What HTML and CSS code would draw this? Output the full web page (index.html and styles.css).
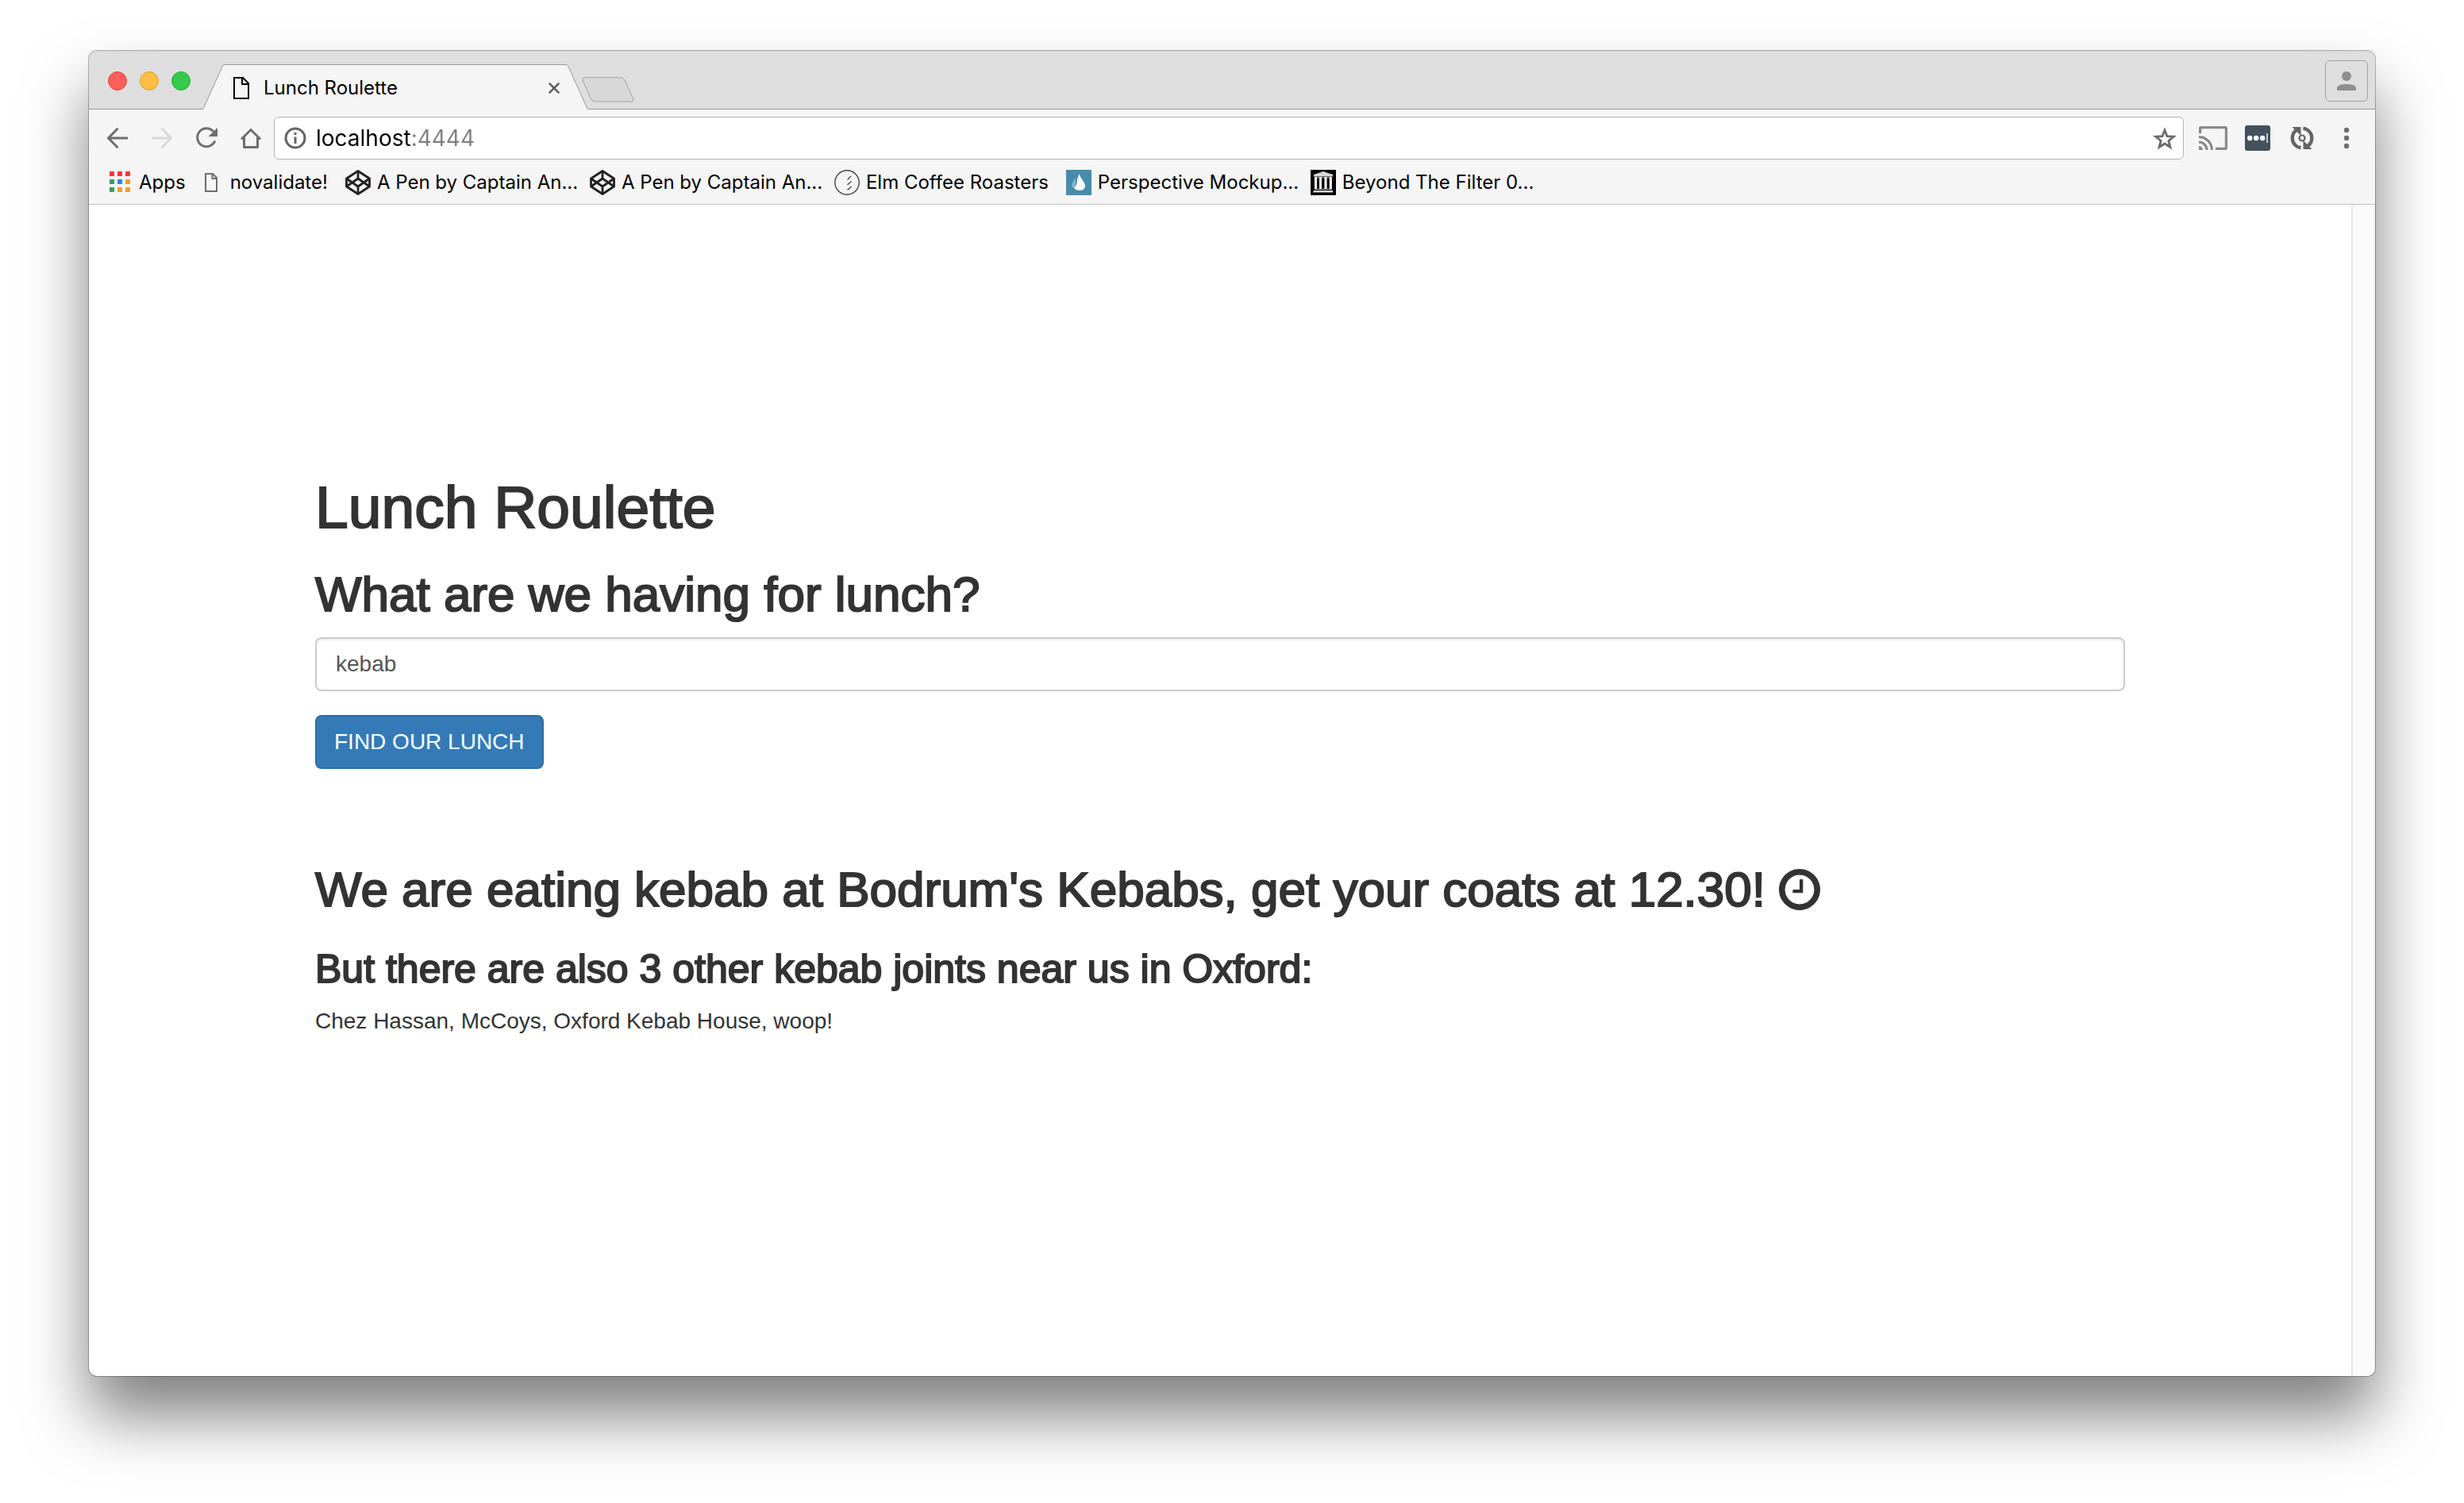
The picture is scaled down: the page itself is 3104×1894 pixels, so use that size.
FILE: index.html
```html
<!DOCTYPE html>
<html lang="en">
<head>
<meta charset="utf-8">
<meta name="viewport" content="width=device-width, initial-scale=1">
<title>Lunch Roulette</title>
<link rel="stylesheet" href="styles.css">
</head>
<body>
<div class="window">
  <header class="tabstrip">
    <div class="lights">
      <button class="light light-close" type="button" aria-label="Close window"></button>
      <button class="light light-minimise" type="button" aria-label="Minimise window"></button>
      <button class="light light-zoom" type="button" aria-label="Zoom window"></button>
    </div>
    <div class="tab">
      <svg class="tab-edge" viewBox="0 0 28 57" aria-hidden="true"><path d="M0 57L1 56.500L25 3Q26 .5 28 .5V57Z" fill="#f5f5f5"/><path d="M0 56.500Q1 56 2 54L25 3Q26 .5 28 .5" fill="none" stroke="#999"/></svg>
      <div class="tab-body">
        <svg class="tab-icon" viewBox="0 0 20 28" fill="none" stroke="#000" stroke-width="2" aria-hidden="true"><path d="M1 1H12L19 8V27H1Z"/><path d="M11 1V9H19"/></svg>
        <span class="tab-title">Lunch Roulette</span>
        <button class="tab-close" type="button" aria-label="Close tab"><svg viewBox="0 0 14 14" stroke="#5a5a5a" stroke-width="2.400" aria-hidden="true"><path d="M.7 .7L13.300 13.300M13.300 .7L.7 13.300"/></svg></button>
      </div>
      <svg class="tab-edge" viewBox="0 0 28 57" aria-hidden="true"><path d="M0 .5Q2 .5 3 3L26 54Q27 56.500 28 56.500V57H0Z" fill="#f5f5f5"/><path d="M0 .5Q2 .5 3 3L26 54Q27 56.500 28 56.500" fill="none" stroke="#999"/></svg>
    </div>
    <button class="new-tab" type="button" aria-label="New tab"><svg viewBox="0 0 66 32" aria-hidden="true"><path d="M4 .7H48Q52 .7 54 4L64.500 27Q66 31 63 31H17Q13 31 11 27L1 4Q0 .7 4 .7Z" fill="#d8d8d8" stroke="#a3a3a3"/></svg></button>
    <button class="profile" type="button" aria-label="Profile"><svg viewBox="0 0 24 24" fill="#8e8e8e" aria-hidden="true"><circle cx="12" cy="6" r="6"/><path d="M0 24V21C0 17 7 16 12 16S24 17 24 21V24Z"/></svg></button>
  </header>

  <nav class="toolbar" aria-label="Navigation">
    <button class="tool" type="button" aria-label="Back"><svg viewBox="0 0 28 28" fill="none" stroke="#6e6e6e" stroke-width="3" aria-hidden="true"><path d="M14.500 1.800L2.500 14L14.500 26.200M3 14H27"/></svg></button>
    <button class="tool" type="button" aria-label="Forward" disabled><svg viewBox="0 0 28 28" fill="none" stroke="#d9d9d9" stroke-width="3" aria-hidden="true"><path d="M13.500 1.800L25.500 14L13.500 26.200M25 14H1"/></svg></button>
    <button class="tool" type="button" aria-label="Reload"><svg viewBox="0 0 28 28" aria-hidden="true"><path d="M23 5.800A11.500 11.500 0 1 0 24.800 17.500" fill="none" stroke="#6e6e6e" stroke-width="3"/><path d="M28 1V12H16.500Z" fill="#6e6e6e"/></svg></button>
    <button class="tool" type="button" aria-label="Home"><svg viewBox="0 0 28 28" fill="none" stroke="#6e6e6e" stroke-width="3" aria-hidden="true"><path d="M2 15.500L14 3.500L26 15.500" stroke-linejoin="miter"/><path d="M5.500 13V25.500H22.500V13" stroke-linejoin="round"/></svg></button>
    <div class="omnibox">
      <svg class="info" viewBox="0 0 28 28" fill="none" stroke="#666" aria-hidden="true"><circle cx="14" cy="14" r="12" stroke-width="3"/><path d="M14 12.500V21M14 7V10" stroke-width="3"/></svg>
      <input class="address" type="text" value="localhost:4444" aria-label="Address" spellcheck="false">
      <button class="star" type="button" aria-label="Bookmark this page"><svg viewBox="0 0 30 28" fill="none" stroke="#6a6a6a" stroke-width="2.800" aria-hidden="true"><path d="M15 4L18 11.700L26.300 12.200L19.900 17.500L22 25.500L15 21L8 25.500L10.100 17.500L3.700 12.200L12 11.700Z"/></svg></button>
    </div>
    <button class="tool" type="button" aria-label="Cast"><svg class="cast" viewBox="0 0 36 30" fill="none" stroke="#8a8a8a" stroke-width="3.200" aria-hidden="true"><path d="M1.600 9V2.500Q1.600 1.600 2.500 1.600H33.500Q34.400 1.600 34.400 2.500V27.500Q34.400 28.400 33.500 28.400H21"/><path d="M0 13.600A16.400 16.400 0 0 1 16.400 30M0 20A10 10 0 0 1 10 30"/><path d="M0 25A5 5 0 0 1 5 30H0Z" fill="#8a8a8a" stroke="none"/></svg></button>
    <button class="tool" type="button" aria-label="Password manager"><svg class="square" viewBox="0 0 32 32" aria-hidden="true"><rect width="32" height="32" rx="3" fill="#43525c"/><g fill="#fff"><circle cx="6.200" cy="16" r="3.200"/><circle cx="14.200" cy="16" r="3.200"/><circle cx="22.200" cy="16" r="3.200"/></g><path d="M28 10V22" stroke="#bcc3c8" stroke-width="2"/></svg></button>
    <button class="tool" type="button" aria-label="Sync"><svg class="square" viewBox="0 0 32 32" fill="none" stroke="#646464" aria-hidden="true"><g stroke-width="4.500"><path d="M9 5.900A12.300 12.300 0 0 0 14.500 28.200"/><path d="M23 26.100A12.300 12.300 0 0 0 17.500 3.800"/></g><path d="M3.500 2H14.500V13Z M28.500 30H17.500V19Z" fill="#646464" stroke="none"/><circle cx="16" cy="16" r="3.500" stroke-width="2.200" fill="#f5f5f5"/></svg></button>
    <button class="tool" type="button" aria-label="Menu"><svg viewBox="0 0 28 28" fill="#6e6e6e" aria-hidden="true"><circle cx="14" cy="4" r="3.200"/><circle cx="14" cy="14" r="3.200"/><circle cx="14" cy="24" r="3.200"/></svg></button>
  </nav>

  <nav class="bookmarks" aria-label="Bookmarks">
    <a class="bookmark" href="#"><svg viewBox="0 0 32 32" aria-hidden="true"><path d="M3 2h6v6h-6zM13 2h6v6h-6zM23 2h6v6h-6z" fill="#f33b3b"/><path d="M3 12h6v6h-6zM3 22h6v6h-6z" fill="#36a05a"/><path d="M13 12h6v6h-6z" fill="#2a86f3"/><path d="M23 12h6v6h-6zM13 22h6v6h-6zM23 22h6v6h-6z" fill="#f0a026"/></svg>Apps</a>
    <a class="bookmark" href="#"><svg viewBox="0 0 32 32" fill="none" stroke="#6e6e6e" stroke-width="2" aria-hidden="true"><path d="M9 5H18L23 10V27H9Z"/><path d="M17.500 5V11H23"/></svg>novalidate!</a>
    <a class="bookmark bookmark-long" href="#"><svg viewBox="0 0 32 32" fill="none" stroke="#222" stroke-width="2.800" stroke-linejoin="round" aria-hidden="true"><path d="M16 1.500L30.500 11V21L16 30.500L1.500 21V11Z"/><path d="M16 1.500V11L30.500 21M16 30.500V21L1.500 11M16 11L1.500 21M16 21L30.500 11"/></svg>A Pen by Captain An...</a>
    <a class="bookmark bookmark-long" href="#"><svg viewBox="0 0 32 32" fill="none" stroke="#222" stroke-width="2.800" stroke-linejoin="round" aria-hidden="true"><path d="M16 1.500L30.500 11V21L16 30.500L1.500 21V11Z"/><path d="M16 1.500V11L30.500 21M16 30.500V21L1.500 11M16 11L1.500 21M16 21L30.500 11"/></svg>A Pen by Captain An...</a>
    <a class="bookmark" href="#"><svg viewBox="0 0 32 32" fill="none" stroke="#444" stroke-width="1.400" aria-hidden="true"><circle cx="16" cy="16" r="15.200"/><path d="M16.500 12.500L21 8M16.500 19L21.500 14.500M16.500 25.500L21.500 21"/></svg>Elm Coffee Roasters</a>
    <a class="bookmark bookmark-long" href="#"><svg viewBox="0 0 32 32" aria-hidden="true"><path fill="#458cac" d="M0 0h32v32H0z"/><path d="M12 10C9 14 7 17 7 20Q8 24 12 24Z" fill="#7db4cf"/><path d="M16.500 5C18 11 24 15 24 21Q23 26 17 26Q11 26 10.500 22Q14 20 14 12Z" fill="#fff"/></svg>Perspective Mockup...</a>
    <a class="bookmark bookmark-long" href="#"><svg viewBox="0 0 32 32" aria-hidden="true"><path d="M0 0h32v32H0z"/><path d="M4 6L16 2L28 6V8.500H4ZM4 26H28V28.500H3Z" fill="#d5d8d5"/><path d="M5 10H27M5 24.500H27" stroke="#aaa" stroke-width="1"/><path d="M6.500 9V24M12.500 9V24M19 9V24M25.300 9V24" stroke="#eee" stroke-width="3.200"/></svg>Beyond The Filter 0...</a>
  </nav>

  <div class="viewport">
    <main class="page">
      <div class="container">
        <h1 class="title">Lunch Roulette</h1>
        <form class="search">
          <label class="heading" for="food">What are we having for lunch?</label>
          <input class="field" id="food" type="text" value="kebab">
          <button class="submit" type="button">FIND OUR LUNCH</button>
        </form>
        <section class="result">
          <h2 class="heading">We are eating kebab at Bodrum's Kebabs, get your coats at 12.30! <svg class="clock" viewBox="0 128 1536 1536" aria-hidden="true"><path fill="currentColor" stroke="none" d="M896 544v448q0 14-9 23t-23 9h-320q-14 0-23-9t-9-23v-64q0-14 9-23t23-9h224v-352q0-14 9-23t23-9h64q14 0 23 9t9 23zm416 352q0-148-73-273t-198-198-273-73-273 73-198 198-73 273 73 273 198 198 273 73 273-73 198-198 73-273zm224 0q0 209-103 385.500t-279.500 279.500-385.500 103-385.500-103-279.500-279.500-103-385.500 103-385.500 279.500-279.500 385.500-103 385.500 103 279.500 279.500 103 385.500z"/></svg></h2>
          <h3 class="subheading">But there are also 3 other kebab joints near us in Oxford:</h3>
          <p class="others">Chez Hassan, McCoys, Oxford Kebab House, woop!</p>
        </section>
      </div>
    </main>
    <div class="scroll-track" aria-hidden="true"></div>
  </div>
</div>
</body>
</html>
```
FILE: styles.css
```css
* { box-sizing: border-box; }

body {
  margin: 0;
  min-height: 100vh;
  padding: 64px 112px 160px;
  display: flex;
  background: #fff;
  color: #333;
  font-family: "Liberation Sans", Arial, sans-serif;
  font-size: 28px;
  line-height: 40px;
}

button {
  margin: 0;
  padding: 0;
  border: 0;
  background: none;
  font: inherit;
}

svg { display: block; flex: none; }

/* Window frame */
.window {
  flex: 1;
  min-width: 0;
  display: flex;
  flex-direction: column;
  border-radius: 10px;
  background: #fff;
  box-shadow: 0 0 0 1px rgba(0, 0, 0, .28), 0 50px 80px rgba(0, 0, 0, .5);
}

/* Tab strip */
.tabstrip {
  height: 74px;
  display: flex;
  align-items: flex-end;
  padding: 0 9px 0 24px;
  border-radius: 10px 10px 0 0;
  background: #dedede;
  box-shadow: inset 0 -1px #999, inset 0 1px #d2d2d2;
  font-family: Inter, "Noto Sans", sans-serif;
}

.lights {
  display: flex;
  gap: 16px;
  margin: 0 15px 24px 0;
}

.light {
  width: 24px;
  height: 24px;
  border: 1px solid;
  border-radius: 50%;
}

.light-close { background: #fe5f5b; border-color: #e2443f; }
.light-minimise { background: #febe41; border-color: #dfa032; }
.light-zoom { background: #35ca4b; border-color: #26ab35; }

.tab { display: flex; }

.tab-edge { width: 28px; height: 57px; }

.tab-body {
  width: 430px;
  display: flex;
  align-items: center;
  padding: 2px 8px 0 11px;
  border-top: 1px solid #999;
  background: #f5f5f5;
  color: #000;
  font-size: 24px;
}

.tab-icon { width: 20px; height: 28px; }

.tab-title { flex: 1; padding-left: 18px; }

.tab-close svg { width: 14px; height: 14px; }

.new-tab { margin: 0 auto 9px -8px; }
.new-tab svg { width: 66px; height: 32px; }

.profile {
  width: 54px;
  height: 52px;
  margin-bottom: 10px;
  display: grid;
  place-items: center;
  border: 1px solid #a0a0a0;
  border-radius: 6px;
}

.profile svg { width: 24px; height: 24px; }

/* Toolbar */
.toolbar {
  display: flex;
  align-items: center;
  padding: 9px 8px 3px;
  background: #f5f5f5;
}

.tool {
  width: 56px;
  height: 54px;
  display: grid;
  place-items: center;
}

.tool svg { width: 28px; height: 28px; }
.tool .cast { width: 36px; height: 30px; }
.tool .square { width: 32px; height: 32px; }

.omnibox {
  flex: 1;
  height: 54px;
  display: flex;
  align-items: center;
  gap: 12px;
  margin: 0 9px 0 1px;
  padding: 0 8px 0 12px;
  border: 1px solid #b4b4b4;
  border-radius: 6px;
  background: #fff;
}

.info { width: 28px; height: 28px; }

.address {
  flex: 1;
  min-width: 0;
  padding: 0;
  border: 0;
  outline: 0;
  font: 28px/40px Inter, "Noto Sans", sans-serif;
  color: transparent;
  background: linear-gradient(90deg, #000 121px, #808080 121px) text;
}

.star svg { width: 30px; height: 28px; }

/* Bookmarks */
.bookmarks {
  height: 54px;
  display: flex;
  align-items: center;
  gap: 16px;
  padding: 0 23px 2px;
  border-bottom: 1px solid #bfbfbf;
  background: #f5f5f5;
  font: 24px/32px Inter, "Noto Sans", sans-serif;
}

.bookmark {
  display: flex;
  gap: 8px;
  padding-right: 6px;
  color: #000;
  text-decoration: none;
  white-space: nowrap;
}

.bookmark svg { width: 32px; height: 32px; }

.bookmark:first-child { padding-right: 0; }

.bookmark-long { width: 292px; padding-right: 0; }

/* Page */
.viewport { flex: 1; display: flex; }

.page { flex: 1; min-width: 0; padding: 341px 40px 80px; }

.container { max-width: 2280px; margin: 0 auto; }

.title,
.heading,
.subheading {
  display: block;
  margin: 0;
  font-weight: 500;
  -webkit-text-stroke: 2px;
}

.title { font-size: 75px; line-height: 80px; margin-bottom: 36px; }
.heading { font-size: 62px; line-height: 68px; }
.subheading { font-size: 50px; line-height: 56px; margin: 38px 0 18px; }

.field {
  display: block;
  width: 100%;
  height: 68px;
  margin: 20px 0 30px;
  padding: 0 24px;
  border: 2px solid #ccc;
  border-radius: 8px;
  outline: 0;
  background: #fff;
  box-shadow: inset 0 2px 2px rgba(0, 0, 0, .075);
  color: #555;
  font: inherit;
}

.submit {
  height: 68px;
  padding: 0 22px;
  border: 2px solid #2e6da4;
  border-radius: 8px;
  background: #337ab7;
  color: #fff;
}

.result { margin-top: 118px; }

.clock {
  display: inline-block;
  width: 52px;
  height: 52px;
  vertical-align: -5px;
}

.others { margin: 0; }

.scroll-track {
  width: 30px;
  border: solid #e8e8e8;
  border-width: 0 2px;
  border-right-color: #f0f0f0;
  border-radius: 0 0 10px 0;
  background: #fafafa;
}
```
